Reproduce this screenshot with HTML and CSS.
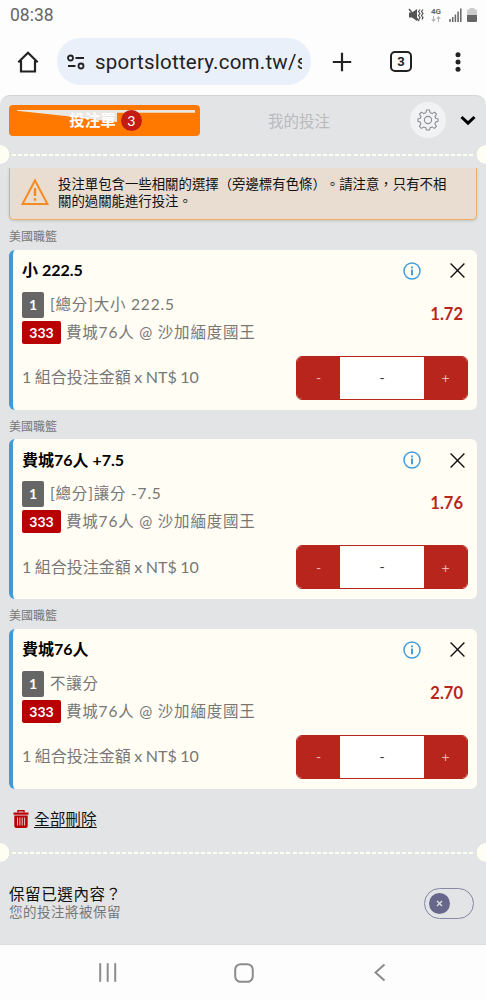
FILE: index.html
```html
<!DOCTYPE html>
<html lang="zh-Hant">
<head>
  <meta charset="UTF-8">
  <meta name="viewport" content="width=device-width, initial-scale=1.0">
  <title>投注單</title>
  <link rel="stylesheet" href="styles.css">
</head>
<body>
  <div class="status-bar">
    <span class="clock">08:38</span>
    <div class="status-icons">
      <svg class="mute" width="16" height="14" viewBox="0 0 16 14">
        <path d="M1 4.5h3L9 1v12L4 9.5H1z" fill="#555"/>
        <path d="M1 1l10 12" stroke="#555" stroke-width="1.4"/>
        <path d="M12 1.5l-1.5 2 1.5 2-1.5 2 1.5 2-1 2M15 1.5l-1.5 2 1.5 2-1.5 2 1.5 2-1 2" fill="none" stroke="#555" stroke-width="1.2"/>
      </svg>
      <div class="network">
        <span>4G</span>
        <svg width="10" height="6" viewBox="0 0 10 6"><path d="M2.5 0v5M.7 3.2l1.8 1.9 1.8-1.9M7.5 6V1M5.7 2.8l1.8-1.9 1.8 1.9" fill="none" stroke="#b5b5b5" stroke-width="1.1"/></svg>
      </div>
      <svg class="signal" width="13" height="14" viewBox="0 0 13 14"><path d="M1 14v-3M3.7 14V9M6.4 14V6.5M9.1 14V3.5M11.8 14V.5" stroke="#666" stroke-width="1.5"/></svg>
      <svg class="battery" width="10" height="14" viewBox="0 0 10 14">
        <path d="M2.5 0h5v1.500H9a1 1 0 0 1 1 1V7H0V2.500a1 1 0 0 1 1-1h1.500z" fill="#ccc"/>
        <path d="M0 7h10v6a1 1 0 0 1-1 1H1a1 1 0 0 1-1-1z" fill="#666"/>
      </svg>
    </div>
  </div>

  <div class="browser-bar">
    <svg class="home" width="22" height="22" viewBox="0 0 22 22"><path d="M1.3 11.3L11 1.8l9.7 9.500M4 9.500v11h14v-11" fill="none" stroke="#222" stroke-width="2.2"/></svg>
    <div class="address">
      <svg width="18" height="16" viewBox="0 0 18 16"><g fill="none" stroke="#222" stroke-width="1.8"><circle cx="3.5" cy="4" r="2.5"/><path d="M8.5 4H17M1 12h7.500"/><circle cx="14" cy="12" r="2.5"/></g></svg>
      <span class="url">sportslottery.com.tw/s</span>
    </div>
    <svg class="plus" width="20" height="20" viewBox="0 0 20 20"><path d="M10 .8v18.400M.8 10h18.400" stroke="#222" stroke-width="2.2"/></svg>
    <div class="tab-count">3</div>
    <svg class="more" width="6" height="20" viewBox="0 0 6 20"><g fill="#222"><circle cx="3" cy="2.7" r="2.5"/><circle cx="3" cy="10" r="2.5"/><circle cx="3" cy="17.3" r="2.5"/></g></svg>
  </div>

  <div class="slip">
    <div class="slip-header">
      <button class="slip-tab active">
        <svg class="tab-shine" width="178" height="13" viewBox="0 0 178 13"><path d="M0 0h178v2.800H100V12Q82 10.500 62 7.500L0 .8z" fill="#e9e6e4"/></svg>
        <span class="tab-label">投注單</span>
        <span class="badge">3</span>
      </button>
      <button class="slip-tab">我的投注</button>
      <button class="settings">
        <svg width="22" height="22" viewBox="0 0 22 22"><g fill="none" stroke="#8b8e93" stroke-width="1.1" stroke-linejoin="round"><path d="M9.500 1h3l.6 2.700 2 .9L17.500 3.100l2 2-1.500 2.400.8 2L21 9.700v2.700l-2.300.6-.8 2 1.500 2.400-2 2-2.400-1.500-2 .8-.6 2.300h-3l-.6-2.300-2-.8-2.400 1.500-2-2 1.500-2.400-.8-2L1 12.400V9.700l2.200-.2.8-2-1.500-2.400 2-2 2.400 1.500 2-.9z"/><circle cx="11" cy="11" r="3.6"/></g></svg>
      </button>
      <svg class="chevron" width="16" height="11" viewBox="0 0 16 11"><path d="M1.500 2L8 8.200 14.500 2" fill="none" stroke="#000" stroke-width="3"/></svg>
    </div>
    <div class="tear"></div>

    <div class="slip-content">
      <div class="warning">
        <svg width="28" height="28" viewBox="0 0 28 28"><path d="M14 2.500L26.500 26h-25z" fill="none" stroke="#f68b1f" stroke-width="2"/><path d="M14 10v8M14 20.200v2.600" stroke="#f68b1f" stroke-width="2.5"/></svg>
        <p>投注單包含一些相關的選擇（旁邊標有色條）。請注意，只有不相<br>關的過關能進行投注。</p>
      </div>

      <div id="bets"></div>

      <a class="delete-all">
        <svg width="16" height="18" viewBox="0 0 16 18"><path d="M5 2.500V.7h6v1.800" fill="none" stroke="#b80000" stroke-width="1.4"/><path d="M.5 2.500h15v2.200H.5z" fill="#b80000"/><path d="M1.300 5.500h13.400V16a2 2 0 0 1-2 2H3.300a2 2 0 0 1-2-2z" fill="#b80000"/><path d="M4.500 7.500v8M6.900 7.500v8M9.200 7.500v8M11.600 7.500v8" stroke="#e9c5c6"/></svg>
        <span>全部刪除</span>
      </a>
    </div>

    <div class="tear"></div>
    <div class="keep">
      <div>
        <div class="keep-title">保留已選內容？</div>
        <div class="keep-note">您的投注將被保留</div>
      </div>
      <div class="toggle"><span class="knob"><svg width="7" height="7" viewBox="0 0 7 7"><path d="M1 1l5 5M6 1L1 6" stroke="#e3e4e6" stroke-width="1.3"/></svg></span></div>
    </div>
  </div>

  <div class="nav-bar">
    <svg width="18" height="19" viewBox="0 0 18 19"><path d="M1.200 1v17M8.700 1v17M16.200 1v17" stroke="#8c8c8c" stroke-width="2" stroke-linecap="round"/></svg>
    <svg class="nav-home" width="20" height="20" viewBox="0 0 20 20"><rect x="1.2" y="1.2" width="17.6" height="17.6" rx="5.5" fill="none" stroke="#8c8c8c" stroke-width="2"/></svg>
    <svg width="12" height="19" viewBox="0 0 12 19"><path d="M10.500 1.500l-9 8 9 8" fill="none" stroke="#8c8c8c" stroke-width="2.1"/></svg>
  </div>

  <script>
    const bets = [
      { title: "小 222.5", market: "[總分]大小 222.5", odds: "1.72" },
      { title: "費城76人 +7.5", market: "[總分]讓分 -7.5", odds: "1.76" },
      { title: "費城76人", market: "不讓分", odds: "2.70" }
    ];

    document.getElementById("bets").innerHTML = bets.map((bet) => `
      <div class="league">美國職籃</div>
      <div class="card">
        <div class="card-head">
          <span class="title">${bet.title}</span>
          <svg class="info" width="18" height="18" viewBox="0 0 18 18"><circle cx="9" cy="9" r="8" fill="none" stroke="#459dd9" stroke-width="1.5"/><path d="M9 7.500v5.800M9 4.400v1.900" stroke="#459dd9" stroke-width="2"/></svg>
          <svg class="close" width="15" height="15" viewBox="0 0 15 15"><path d="M.6.6l13.800 13.800M14.400.6L.6 14.400" stroke="#111" stroke-width="1.4"/></svg>
        </div>
        <div class="card-body">
          <div class="selection">
            <div class="line market"><span class="tag">1</span><span>${bet.market}</span></div>
            <div class="line match"><span class="tag red">333</span><span>費城76人 @ 沙加緬度國王</span></div>
          </div>
          <span class="odds">${bet.odds}</span>
        </div>
        <div class="stake">
          <span class="stake-label">1 組合投注金額 x NT$ 10</span>
          <div class="stepper">
            <button>-</button>
            <span class="amount">-</span>
            <button>+</button>
          </div>
        </div>
      </div>`).join("");
  </script>
</body>
</html>
```
FILE: styles.css
```css
* {
  box-sizing: border-box;
}
body {
  margin: 0;
  width: 486px;
  height: 1000px;
  overflow: hidden;
  background-color: #fdfdfd;
  font-family: Lato, 'Noto Sans CJK TC', sans-serif;
  text-spacing-trim: space-all;
  display: flex;
  flex-direction: column;
}
svg {
  display: block;
  flex-shrink: 0;
}
button {
  border: 0;
  padding: 0;
  background: none;
  font-family: inherit;
}

/* Phone status bar */
.status-bar {
  height: 30px;
  padding: 0 9px 0 10px;
  display: flex;
  align-items: center;
  justify-content: space-between;
}
.clock {
  font: 17.5px Roboto, sans-serif;
  color: #666;
}
.status-icons {
  display: flex;
  align-items: center;
}
.network {
  width: 11px;
  margin: 0 7px 0 7px;
  font: bold 8px/8px Roboto, sans-serif;
  color: #666;
}
.signal {
  margin-right: 5px;
}

/* Browser toolbar */
.browser-bar {
  height: 65px;
  padding: 0 0 2px 17px;
  display: flex;
  align-items: center;
  color: #222;
}
.address {
  width: 254px;
  height: 47px;
  margin: 0 21px 0 18px;
  padding: 0 9px 0 10px;
  border-radius: 24px;
  background-color: #eaf0fa;
  display: flex;
  align-items: center;
}
.url {
  margin-left: 10px;
  overflow: hidden;
  white-space: nowrap;
  font: 20.5px Roboto, sans-serif;
  letter-spacing: 0.22px;
}
.tab-count {
  flex-shrink: 0;
  width: 22px;
  height: 21px;
  margin: 0 43px 0 38px;
  border: 2px solid #222;
  border-radius: 5px;
  font: bold 13px/17px Roboto, sans-serif;
  text-align: center;
}

/* Betting slip */
.slip {
  height: 850px;
  background-color: #e3e4e6;
  border-top: 1px solid #d5d5d5;
  border-bottom: 1px solid #dcdcde;
  border-radius: 10px 10px 0 0;
  overflow: hidden;
}
.slip-header {
  height: 49px;
  padding: 0 0 1px 9px;
  display: flex;
  align-items: center;
}
.slip-tab {
  position: relative;
  width: 191px;
  height: 31px;
  font-size: 15.5px;
  color: #b8babd;
  display: flex;
  align-items: center;
  justify-content: center;
}
.slip-tab + .slip-tab {
  width: 198px;
}
.slip-tab.active {
  border-radius: 4px;
  background-color: #ff7900;
  color: #fff;
  font-weight: bold;
}
.tab-shine {
  position: absolute;
  left: 8px;
  top: 5px;
}
.tab-label {
  position: relative;
  margin: 0 0 3px 2px;
}
.badge {
  position: relative;
  width: 21px;
  height: 21px;
  margin-left: 5px;
  border-radius: 50%;
  background-color: #c41c13;
  font-size: 14px;
  font-weight: normal;
  line-height: 21px;
}
.settings {
  width: 36px;
  height: 36px;
  margin-left: 12px;
  border-radius: 50%;
  background-color: #f1f2f4;
  display: flex;
  align-items: center;
  justify-content: center;
}
.chevron {
  margin-left: 14px;
}
.tear {
  height: 19px;
  background:
    radial-gradient(circle at 0 50%, #fffef3 9px, transparent 9.5px) no-repeat,
    radial-gradient(circle at 100% 50%, #fffef3 9px, transparent 9.5px) no-repeat,
    repeating-linear-gradient(90deg, #fffef3 0 4px, transparent 4px 6.1px) 12px 9px / 462px 2px no-repeat;
}
.slip-content {
  height: 675px;
  margin-top: 4px;
  padding: 0 9px;
  overflow: hidden;
}
.warning {
  height: 52px;
  padding: 0 12px 4px 11px;
  border: 1px solid #f0ae66;
  border-top: 0;
  border-radius: 0 0 5px 5px;
  background-color: #e9ddd1;
  box-shadow: 0 1px 3px rgba(0, 0, 0, 0.15);
  display: flex;
  align-items: center;
  color: #111;
}
.warning p {
  margin: 3px 0 0 9px;
  font-size: 13.4px;
  line-height: 17.5px;
  white-space: nowrap;
}
.league {
  height: 29.5px;
  padding-top: 4px;
  font-size: 12px;
  line-height: 26px;
  color: #777;
}
.card {
  height: 160px;
  padding-left: 9px;
  border-left: 4px solid #3f9ad8;
  border-radius: 6px;
  background-color: #fffdf4;
}
.card-head {
  height: 42px;
  padding-right: 12px;
  display: flex;
  align-items: center;
}
.title {
  flex-grow: 1;
  margin-bottom: 3px;
  font-size: 16px;
  font-weight: bold;
  color: #000;
}
.info {
  margin-right: 29px;
}
.card-body {
  height: 52px;
  display: flex;
  justify-content: space-between;
}
.line {
  display: flex;
  font-size: 15.5px;
  letter-spacing: 0.8px;
  color: #777;
}
.market {
  height: 29px;
  line-height: 24px;
}
.match {
  height: 23px;
  line-height: 22px;
}
.tag {
  width: 22px;
  height: 26px;
  margin-right: 6px;
  border-radius: 2px;
  background-color: #666;
  color: #fff;
  font-size: 14px;
  font-weight: bold;
  letter-spacing: 0;
  line-height: 26px;
  text-align: center;
}
.tag.red {
  width: 39px;
  height: 23px;
  margin-right: 5px;
  background-color: #b80000;
  line-height: 23px;
}
.odds {
  margin: 12px 14px 0 0;
  font-size: 16.5px;
  line-height: 20px;
  font-weight: bold;
  color: #b7251c;
}
.stake {
  height: 44px;
  margin: 12px 9px 0 0;
  display: flex;
  align-items: center;
  justify-content: space-between;
}
.stake-label {
  margin-bottom: 3px;
  font-size: 16px;
  word-spacing: -0.6px;
  color: #777;
}
.stepper {
  width: 172px;
  height: 44px;
  border: 1px solid #b7251c;
  border-radius: 6px;
  background-color: #fff;
  overflow: hidden;
  display: flex;
}
.stepper button {
  width: 43px;
  background-color: #b7251c;
  color: #e8b5b1;
  font-size: 14px;
}
.amount {
  flex-grow: 1;
  font-size: 14px;
  line-height: 41px;
  text-align: center;
  color: #333;
}
.delete-all {
  height: 61px;
  padding-left: 4px;
  display: flex;
  align-items: center;
  color: #111;
  font-size: 15.7px;
  text-decoration: underline;
  text-underline-offset: 2px;
}
.delete-all span {
  margin: 0 0 2px 5px;
}
.keep {
  padding: 20px 12px 0 9px;
  display: flex;
  justify-content: space-between;
}
.keep-title {
  margin-top: 2px;
  font-size: 15.5px;
  line-height: 20px;
  letter-spacing: 0.6px;
  color: #111;
}
.keep-note {
  font-size: 13.5px;
  line-height: 17px;
  letter-spacing: 0.5px;
  color: #777;
}
.toggle {
  width: 50px;
  height: 31px;
  margin-top: 6px;
  padding: 4px;
  border: 1px solid #8787a6;
  border-radius: 16px;
}
.knob {
  width: 21px;
  height: 21px;
  border-radius: 50%;
  background-color: #67678c;
  display: flex;
  align-items: center;
  justify-content: center;
}

/* Android navigation */
.nav-bar {
  height: 55px;
  padding: 0 100px 0 99px;
  display: flex;
  align-items: center;
  justify-content: space-between;
}
.nav-home {
  margin-right: 4px;
}
```
